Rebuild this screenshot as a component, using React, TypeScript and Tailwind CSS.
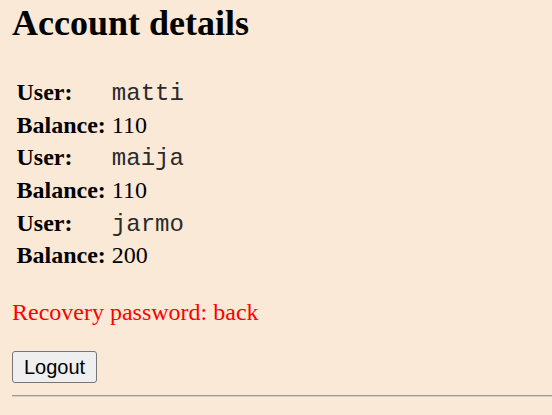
const accounts = [
  { user: 'matti', balance: 110 },
  { user: 'maija', balance: 110 },
  { user: 'jarmo', balance: 200 },
];

export default function App() {
  return (
    <div className="min-h-[415px] bg-[#fae9d7] pl-[12px] pt-[3px] font-['Liberation_Serif',serif] text-[24px] text-black">
      <h1 className="text-[36px] font-bold leading-[41.4px]">Account details</h1>

      <div className="mt-[31.5px] grid grid-cols-[max-content_max-content] auto-rows-[32.67px] gap-x-[6px] pl-[4.5px] leading-[32.67px]">
        {accounts.map((a) => (
          <>
            <div key={a.user + '-ul'} className="font-bold">User:</div>
            <div key={a.user + '-uv'}>
              <span className="font-['Liberation_Mono',monospace] leading-none text-[#2a2a2a]">{a.user}</span>
            </div>
            <div key={a.user + '-bl'} className="font-bold">Balance:</div>
            <div key={a.user + '-bv'}>{a.balance}</div>
          </>
        ))}
      </div>

      <p className="mt-[27px] leading-[27.6px] text-[#ff0000]">Recovery password: back</p>

      <div className="mt-[24.5px] flex">
        <button className="h-[32px] w-[85px] rounded-[3px] border-[1.5px] border-[#767676] bg-[#efefef] font-['Liberation_Sans',Arial,sans-serif] text-[20px] leading-none text-black">
          Logout
        </button>
      </div>

      <div className="mt-[12px] h-[2px] border-t border-t-[#9a9a9a] border-b border-b-[#d8d0c8]" />
    </div>
  );
}
